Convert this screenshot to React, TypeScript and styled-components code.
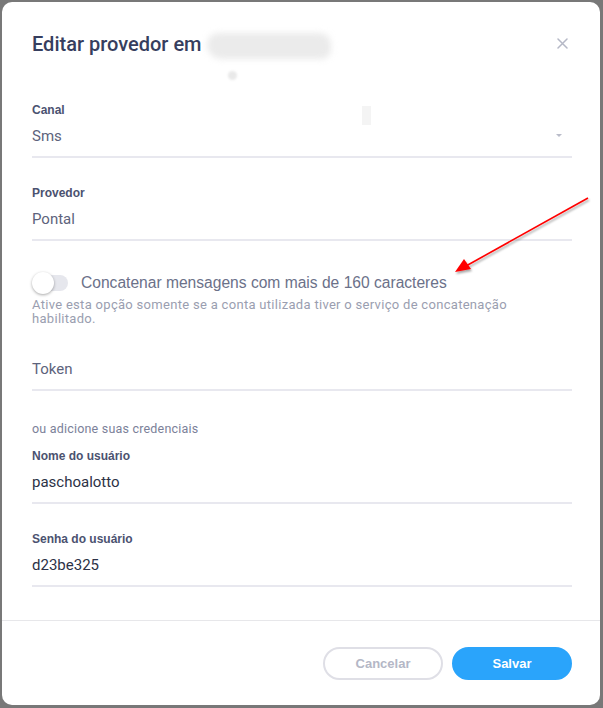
import React from 'react';
import styled, { createGlobalStyle } from 'styled-components';

const GlobalStyle = createGlobalStyle`
	html, body {
		margin: 0;
		padding: 0;
		background-color: #787878;
	}
	* {
		box-sizing: border-box;
	}
`;

const Page = styled.div`
	width: 603px;
	height: 708px;
	padding: 2px 3px 3px 2px;
	background-color: #787878;
`;

const Modal = styled.div`
	position: relative;
	width: 598px;
	height: 703px;
	background-color: #fff;
	border-radius: 10px;
	display: flex;
	flex-direction: column;
	overflow: hidden;
`;

const Header = styled.div`
	display: flex;
	align-items: center;
	justify-content: space-between;
	padding: 26px 28px 0 30px;
	height: 58px;
`;

const Title = styled.h2`
	margin: 0;
	font-family: Roboto, 'Noto Sans', sans-serif;
	font-weight: 500;
	font-size: 20px;
	line-height: 32px;
	color: #363e5e;
	display: flex;
	align-items: center;
`;

const Redacted = styled.span`
	display: inline-block;
	width: 124px;
	height: 26px;
	margin-left: 5px;
	margin-top: 4px;
	border-radius: 13px 13px 10px 16px;
	background-color: #ebebeb;
	filter: blur(3px);
`;

const RedactedDot = styled.span`
	position: absolute;
	left: 226px;
	top: 69px;
	width: 9px;
	height: 9px;
	border-radius: 50%;
	background-color: #e9e9e9;
	filter: blur(1px);
`;

const RedactedBar = styled.span`
	position: absolute;
	left: 360px;
	top: 104px;
	width: 9px;
	height: 19px;
	background-color: #f4f4f4;
`;

const CloseButton = styled.button`
	border: none;
	background: transparent;
	padding: 0;
	width: 11px;
	height: 11px;
	display: flex;
	cursor: pointer;
	margin-right: 4px;
	margin-top: -2px;
`;

const Body = styled.div`
	padding: 42px 28px 0 30px;
	display: flex;
	flex-direction: column;
`;

const Field = styled.div<{ $gap?: number }>`
	display: flex;
	flex-direction: column;
	margin-top: ${(p) => p.$gap ?? 0}px;
`;

const Label = styled.label`
	font-family: 'Liberation Sans', Arial, sans-serif;
	font-weight: 700;
	font-size: 12px;
	line-height: 16px;
	color: #4b5270;
	margin-bottom: 6px;
`;

const Input = styled.div<{ $strong?: boolean }>`
	position: relative;
	font-family: Roboto, 'Noto Sans', sans-serif;
	font-size: 15px;
	line-height: 24px;
	height: 34px;
	padding: 0 0 10px 0;
	color: ${(p) => (p.$strong ? '#2c3246' : '#5d637c')};
	border-bottom: 2px solid #e8e8ef;
`;

const Caret = styled.span`
	position: absolute;
	right: 10px;
	top: 10px;
	width: 0;
	height: 0;
	border-left: 3px solid transparent;
	border-right: 3px solid transparent;
	border-top: 3px solid #b9bcc9;
`;

const ToggleRow = styled.div`
	display: flex;
	align-items: center;
	margin-top: 31px;
	height: 22px;
`;

const Track = styled.span`
	position: relative;
	display: inline-block;
	width: 34px;
	height: 16px;
	border-radius: 8px;
	background-color: #e6e7ed;
	margin-left: 2px;
`;

const Knob = styled.span`
	position: absolute;
	left: -2px;
	top: -3px;
	width: 22px;
	height: 22px;
	border-radius: 50%;
	background-color: #fff;
	box-shadow: 0 1px 3px rgba(0, 0, 0, 0.35);
`;

const ToggleLabel = styled.span`
	font-family: 'Liberation Sans', Arial, sans-serif;
	font-size: 15.6px;
	color: #6b7189;
	margin-left: 13px;
`;

const Helper = styled.p`
	margin: 4px 0 0 0;
	font-family: Roboto, 'Noto Sans', sans-serif;
	font-size: 13px;
	line-height: 14px;
	letter-spacing: 0.3px;
	color: #9a9eb0;
`;

const Note = styled.p`
	margin: 30px 0 0 0;
	font-family: Roboto, 'Noto Sans', sans-serif;
	font-size: 12.5px;
	line-height: 16px;
	letter-spacing: 0.2px;
	color: #7b8199;
`;

const Footer = styled.div`
	margin-top: auto;
	border-top: 1px solid #e7e7ea;
	padding: 26px 28px 25px 0;
	display: flex;
	justify-content: flex-end;
	gap: 9px;
`;

const Button = styled.button<{ $primary?: boolean }>`
	width: 120px;
	height: 33px;
	border-radius: 17px;
	font-family: 'Liberation Sans', Arial, sans-serif;
	font-weight: 700;
	font-size: 13px;
	cursor: pointer;
	border: 2px solid ${(p) => (p.$primary ? '#2aa4fb' : '#dfdfe6')};
	background-color: ${(p) => (p.$primary ? '#2aa4fb' : '#fff')};
	color: ${(p) => (p.$primary ? '#fff' : '#b4b7c6')};
`;

const Annotation = styled.svg`
	position: absolute;
	left: 440px;
	top: 185px;
	overflow: visible;
`;

const App: React.FunctionComponent = () => {
	return (
		<>
			<GlobalStyle />
			<Page>
				<Modal>
					<Header>
						<Title>
							Editar provedor em
							<Redacted />
						</Title>
						<CloseButton type="button" aria-label="Fechar">
							<svg width="11" height="11" viewBox="0 0 11 11">
								<path d="M1 1 L10 10 M10 1 L1 10" stroke="#b5b8c6" strokeWidth="1.5" strokeLinecap="round" />
							</svg>
						</CloseButton>
					</Header>
					<RedactedDot />
					<RedactedBar />
					<Body>
						<Field>
							<Label>Canal</Label>
							<Input>
								Sms
								<Caret />
							</Input>
						</Field>
						<Field $gap={27}>
							<Label>Provedor</Label>
							<Input>Pontal</Input>
						</Field>
						<ToggleRow>
							<Track>
								<Knob />
							</Track>
							<ToggleLabel>Concatenar mensagens com mais de 160 caracteres</ToggleLabel>
						</ToggleRow>
						<Helper>
							Ative esta opção somente se a conta utilizada tiver o serviço de concatenação habilitado.
						</Helper>
						<Field $gap={31}>
							<Input>Token</Input>
						</Field>
						<Note>ou adicione suas credenciais</Note>
						<Field $gap={11}>
							<Label>Nome do usuário</Label>
							<Input $strong>paschoalotto</Input>
						</Field>
						<Field $gap={27}>
							<Label>Senha do usuário</Label>
							<Input $strong>d23be325</Input>
						</Field>
					</Body>
					<Footer>
						<Button type="button">Cancelar</Button>
						<Button type="button" $primary>
							Salvar
						</Button>
					</Footer>
					<Annotation width="150" height="90" viewBox="0 0 150 90">
						<defs>
							<filter id="shadow" x="-20%" y="-20%" width="140%" height="140%">
								<feDropShadow dx="1" dy="2" stdDeviation="1.2" floodColor="#000" floodOpacity="0.35" />
							</filter>
						</defs>
						<g filter="url(#shadow)">
							<line x1="146" y1="11" x2="24" y2="79" stroke="#f00" strokeWidth="1.6" />
							<polygon points="13,85 22,72 29,82" fill="#f00" />
						</g>
					</Annotation>
				</Modal>
			</Page>
		</>
	);
};

export default App;
